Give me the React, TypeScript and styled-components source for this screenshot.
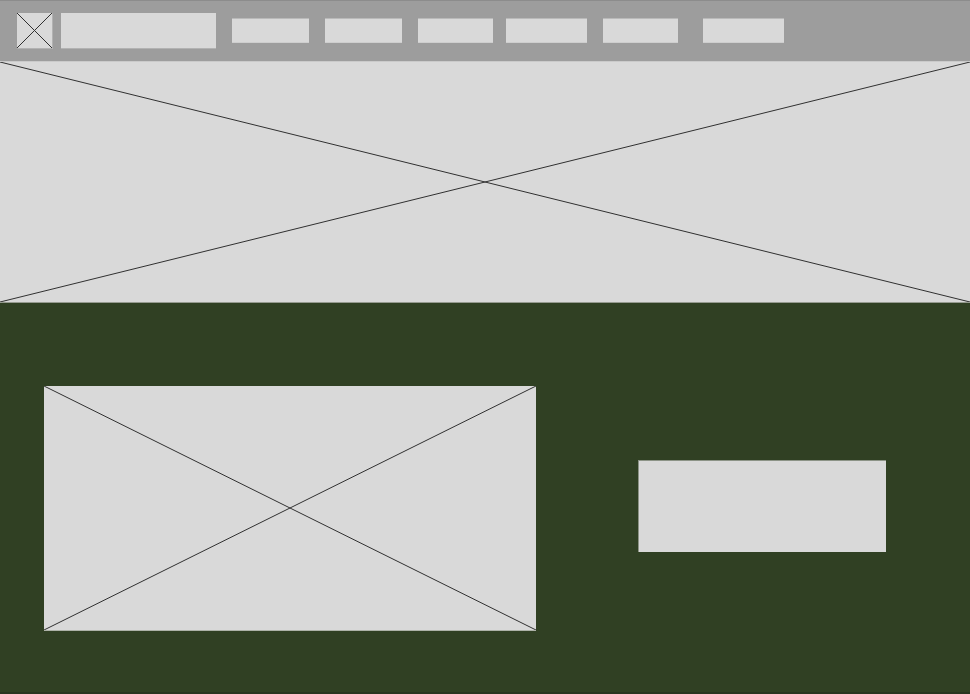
import React from "react";
import styled, { createGlobalStyle } from "styled-components";

const colors = {
  bar: "#9d9d9d",
  barEdge: "#8c8c8c",
  block: "#d9d9d9",
  line: "#303030",
  green: "#304023",
  greenEdge: "#293520",
};

const GlobalStyle = createGlobalStyle`
  *, *::before, *::after { box-sizing: border-box; }
  html, body { margin: 0; }
  body { background: ${colors.green}; font-family: "Liberation Sans", Arial, sans-serif; }
`;

const Page = styled.div`
  display: flex;
  flex-direction: column;
  min-height: 100vh;
`;

const Header = styled.header`
  display: flex;
  align-items: center;
  padding: 12px 17px;
  border-top: 1px solid ${colors.barEdge};
  background: ${colors.bar};
`;

const Logo = styled.div`
  flex: none;
  width: 36px;
  height: 36px;
  border: solid #b2b2b2;
  border-width: 0 1px 1px 0;
`;

const SiteName = styled.div`
  flex: none;
  width: 155px;
  height: 36px;
  margin-left: 8px;
  background: ${colors.block};
  border-bottom: 1px solid #b2b2b2;
`;

const Nav = styled.nav`
  display: flex;
  padding-bottom: 1px;
`;

const NavItem = styled.a<{ $width: number; $gap: number }>`
  display: block;
  width: ${(p) => p.$width}px;
  height: 25px;
  margin-left: ${(p) => p.$gap}px;
  background: ${colors.block};
  border-top: 1px solid #bababa;
  border-bottom: 1px solid #cecece;
`;

const Hero = styled.section`
  height: 242px;
  padding-top: 1px;
  background: #cacaca;
  border-bottom: 1px solid #969b90;
`;

const Feature = styled.section`
  flex: 1;
  display: grid;
  grid-template-columns: 492fr 248fr;
  align-items: start;
  gap: 102px;
  padding: 83px 84px 61px 44px;
  background: ${colors.green};
  border-bottom: 2px solid ${colors.greenEdge};
`;

const FeatureImage = styled.div`
  height: 245px;
  border-bottom: 1px solid #adb2a8;
`;

const FeatureText = styled.div`
  height: 92px;
  margin-top: 74px;
  background: ${colors.block};
  border: solid #8c9386;
  border-width: 1px 0 0 1px;
`;

const Drawing = styled.svg`
  display: block;
  width: 100%;
  height: 100%;
  background: ${colors.block};
`;

function CrossedBox() {
  return (
    <Drawing aria-hidden="true">
      <line x1="0" y1="0" x2="100%" y2="100%" stroke={colors.line} />
      <line x1="0" y1="100%" x2="100%" y2="0" stroke={colors.line} />
    </Drawing>
  );
}

const navItems = [
  { id: "first", width: 77, gap: 16 },
  { id: "second", width: 77, gap: 16 },
  { id: "third", width: 75, gap: 16 },
  { id: "fourth", width: 81, gap: 13 },
  { id: "fifth", width: 75, gap: 16 },
  { id: "sixth", width: 81, gap: 25 },
];

export default function App() {
  return (
    <Page>
      <GlobalStyle />
      <Header>
        <Logo>
          <CrossedBox />
        </Logo>
        <SiteName />
        <Nav>
          {navItems.map((item) => (
            <NavItem key={item.id} href={`#${item.id}`} $width={item.width} $gap={item.gap} />
          ))}
        </Nav>
      </Header>
      <Hero>
        <CrossedBox />
      </Hero>
      <Feature>
        <FeatureImage>
          <CrossedBox />
        </FeatureImage>
        <FeatureText />
      </Feature>
    </Page>
  );
}
